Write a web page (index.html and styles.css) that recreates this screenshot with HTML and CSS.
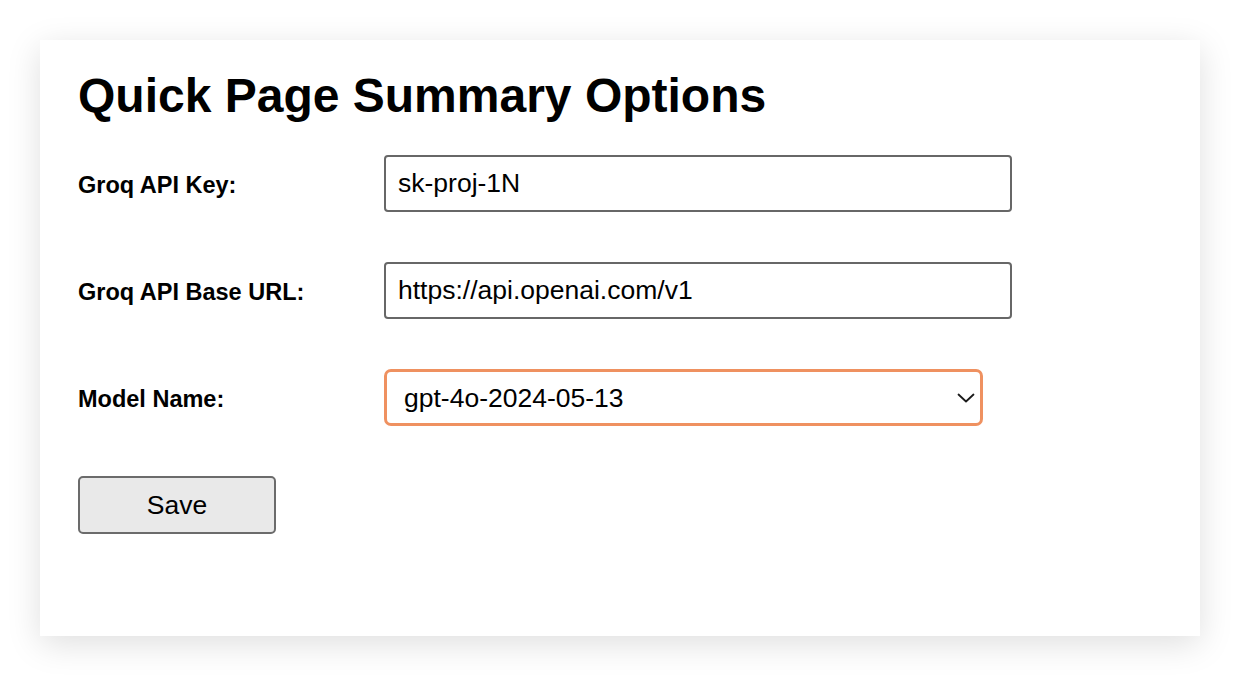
FILE: index.html
```html
<!DOCTYPE html>
<html lang="en">
<head>
<meta charset="utf-8">
<title>Quick Page Summary Options</title>
<link rel="stylesheet" href="styles.css">
</head>
<body>
  <main class="card">
    <h1 class="title">Quick Page Summary Options</h1>
    <form class="form">
      <div class="row">
        <label class="label" for="key">Groq API Key:</label>
        <input class="field" id="key" type="text" value="sk-proj-1N">
      </div>
      <div class="row">
        <label class="label" for="url">Groq API Base URL:</label>
        <input class="field" id="url" type="text" value="https://api.openai.com/v1">
      </div>
      <div class="row">
        <label class="label" for="model">Model Name:</label>
        <div class="select-wrap">
          <select class="select" id="model">
            <option>gpt-4o-2024-05-13</option>
          </select>
          <svg class="chevron" width="18" height="10" viewBox="0 0 18 10" aria-hidden="true">
            <path d="M1.5 1.5 L9 8.5 L16.5 1.5" fill="none" stroke="#1a1a1a" stroke-width="1.8" stroke-linecap="round" stroke-linejoin="round"/>
          </svg>
        </div>
      </div>
      <div class="row">
        <button class="save" type="button">Save</button>
      </div>
    </form>
  </main>
</body>
</html>
```

FILE: styles.css
```css
html, body {
  margin: 0;
  padding: 0;
  background: #ffffff;
}

body {
  padding: 40px;
  font-family: "Liberation Sans", Arial, Helvetica, sans-serif;
  color: #000;
}

.card {
  box-sizing: border-box;
  width: 1160px;
  height: 596px;
  padding: 28px 38px 0;
  background: #ffffff;
  box-shadow: 0 8px 32px rgba(0, 0, 0, 0.13);
}

.title {
  margin: 0 0 31px;
  font-size: 48px;
  line-height: 56px;
  font-weight: bold;
}

.form {
  display: flex;
  flex-direction: column;
  gap: 50px;
}

.row {
  display: flex;
  align-items: center;
}

.label {
  width: 306px;
  flex: none;
  padding-top: 3px;
  font-size: 23.5px;
  font-weight: bold;
}

.field {
  box-sizing: border-box;
  width: 628px;
  height: 57px;
  margin: 0;
  padding: 0 12px;
  border: 2px solid #676767;
  border-radius: 4px;
  background: #fff;
  font-family: inherit;
  font-size: 26.5px;
  color: #000;
  outline: none;
}

.select-wrap {
  position: relative;
  width: 599px;
  height: 57px;
}

.select {
  box-sizing: border-box;
  width: 100%;
  height: 100%;
  margin: 0;
  padding: 0 40px 0 17px;
  border: 3.5px solid #ef9160;
  border-radius: 7px;
  background: #fff;
  font-family: inherit;
  font-size: 26.5px;
  color: #000;
  appearance: none;
  -webkit-appearance: none;
  outline: none;
}

.chevron {
  position: absolute;
  right: 8px;
  top: 24px;
  pointer-events: none;
}

.save {
  box-sizing: border-box;
  width: 198px;
  height: 58px;
  margin: 0;
  padding: 0;
  border: 2px solid #6b6b6b;
  border-radius: 5px;
  background: #e9e9e9;
  font-family: inherit;
  font-size: 26.5px;
  color: #000;
}
```
